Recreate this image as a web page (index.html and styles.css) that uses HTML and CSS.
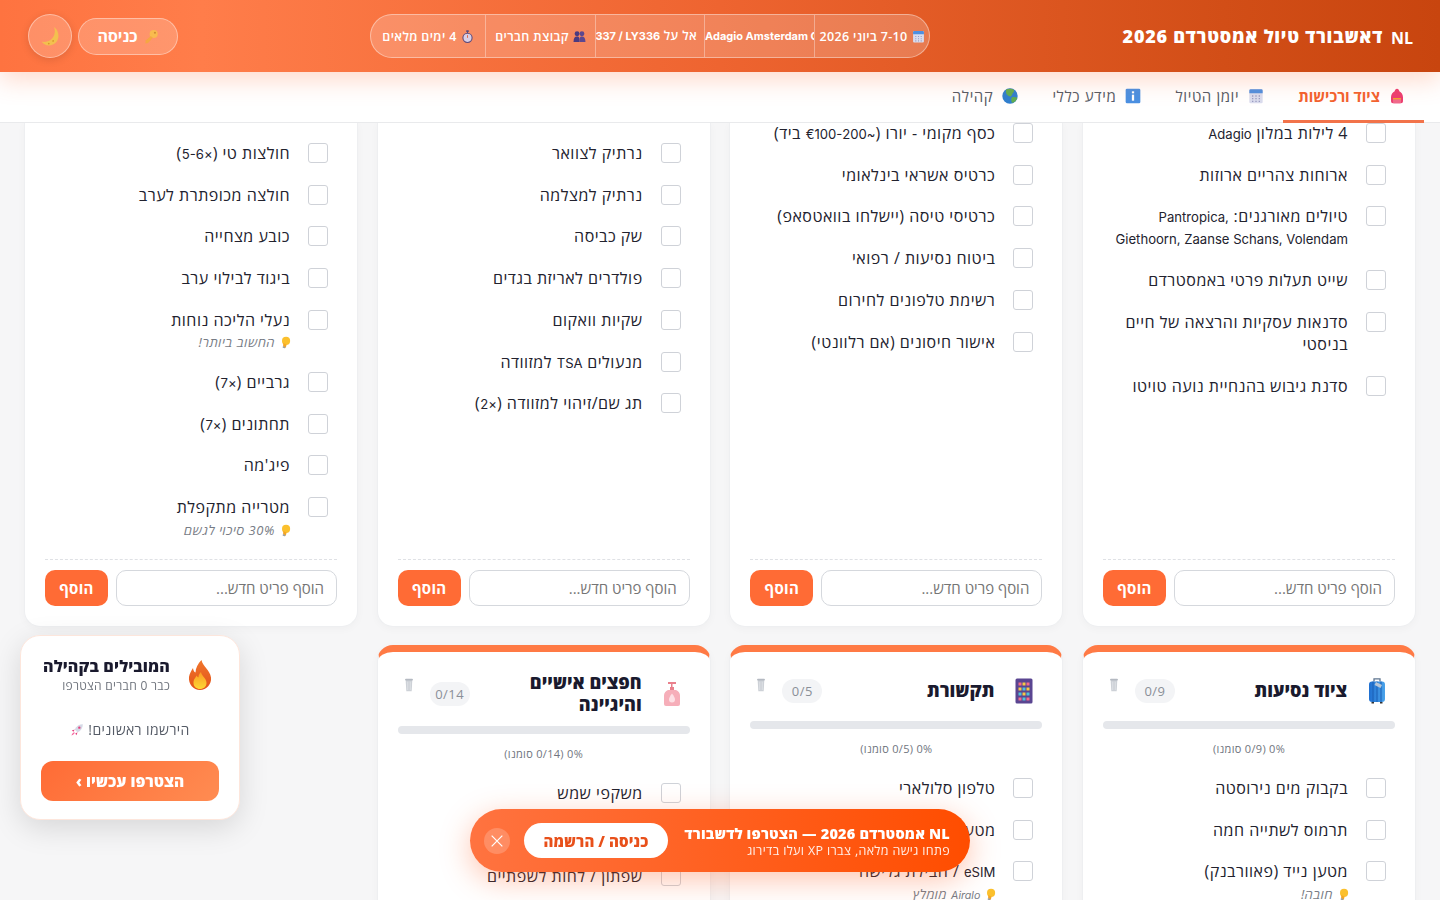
FILE: index.html
```html
<!DOCTYPE html>
<html lang="he" dir="rtl">

<head>
    <meta charset="UTF-8">
    <meta name="viewport" content="width=device-width, initial-scale=1.0">
    <title>דאשבורד טיול אמסטרדם 2026</title>
    <link rel="stylesheet" href="styles.css">
</head>

<body>
    <svg class="sprites" width="0" height="0" aria-hidden="true">
        <defs>
            <linearGradient id="flame" x1="0" y1="0" x2="0" y2="1">
                <stop offset="0" stop-color="#f0762b"/><stop offset="1" stop-color="#e3521a"/>
            </linearGradient>
            <linearGradient id="flameIn" x1="0" y1="0" x2="0" y2="1">
                <stop offset="0" stop-color="#fb9a24"/><stop offset="1" stop-color="#fdd835"/>
            </linearGradient>
            <linearGradient id="caseBlue" x1="0" y1="0" x2="1" y2="0">
                <stop offset="0" stop-color="#1f6fd0"/><stop offset="1" stop-color="#4aa3ea"/>
            </linearGradient>
        </defs>
        <symbol id="i-moon" viewBox="0 0 24 24"><path d="M16 1c2 5 .8 10.500-3 14-2.900 2.600-6.700 3.600-11 3 2.500 3.500 7.500 5.300 12 3.500 5.500-2.200 8.200-7.800 6.700-13.300C20 5 18.300 2.600 16 1z" fill="#f3c04f"/><circle cx="15" cy="17" r="1" fill="#d99a2b"/><circle cx="10" cy="20" r="1" fill="#d99a2b"/></symbol>
        <symbol id="i-key" viewBox="0 0 24 24"><circle cx="15.500" cy="8" r="6.500" fill="#f8c24a"/><path d="M11 11l3 3-7.500 8.500L2 23l1-5z" fill="#f4ab3c"/><circle cx="17.500" cy="6" r="1.700" fill="#c88c2a"/></symbol>
        <symbol id="i-watch" viewBox="0 0 24 24"><rect x="9.500" y="0.500" width="5" height="3" rx="1" fill="#5d4b7c"/><rect x="11" y="3" width="2" height="3" fill="#5d4b7c"/><circle cx="12" cy="14.500" r="8.500" fill="#d9cfe6" stroke="#5d4b7c" stroke-width="2"/><path d="M12 14.500V9.500" stroke="#e2552a" stroke-width="1.500"/></symbol>
        <symbol id="i-people" viewBox="0 0 24 24"><circle cx="7.500" cy="7" r="4.500" fill="#4b3a80"/><circle cx="16.500" cy="7" r="4.500" fill="#5b4790"/><path d="M1 22c0-7 2-10 6.500-10S12 15 12 22z" fill="#4b3a80"/><path d="M12 22c0-7 .5-10 4.500-10S23 15 23 22z" fill="#5b4790"/></symbol>
        <symbol id="i-cal" viewBox="0 0 24 24"><rect x="2" y="2" width="20" height="21" rx="2" fill="#d9dcee"/><path d="M2 8V4a2 2 0 0 1 2-2h16a2 2 0 0 1 2 2v4z" fill="#4f8fe0"/><path d="M6 11h2v2H6zm5 0h2v2h-2zm5 0h2v2h-2zM6 15h2v2H6zm5 0h2v2h-2zm5 0h2v2h-2zM6 19h2v2H6zm5 0h2v2h-2zm5 0h2v2h-2z" fill="#9a9dc2"/></symbol>
        <symbol id="i-bag" viewBox="0 0 24 24"><path d="M12 1C10 1 9 2.500 8.500 5 5.500 6.500 3 9.500 3 14v6a3 3 0 0 0 3 3h12a3 3 0 0 0 3-3v-6c0-4.500-2.500-7.500-5.500-9C15 2.500 14 1 12 1z" fill="#ec3f72"/><rect x="6" y="15" width="12" height="8" rx="1.500" fill="#f06a8b"/><path d="M6 15h12v2H6z" fill="#f4a32e"/></symbol>
        <symbol id="i-info" viewBox="0 0 24 24"><rect x="1" y="1" width="22" height="22" rx="2" fill="#4a90e2"/><rect x="10.300" y="10" width="3.400" height="9" fill="#fff"/><rect x="10.300" y="5" width="3.400" height="3" fill="#fff"/></symbol>
        <symbol id="i-globe" viewBox="0 0 24 24"><circle cx="12" cy="12" r="11.500" fill="#2f7fcf"/><path d="M7 2c3-1.500 8-1.500 11 1 1 3-2 4-3 7s-3 3-5 2-4-3-4-6 0-3 1-4zM15 14c3-1 6 0 8 .500-1 4-4 7-8 8-1-3-2-6.500 0-8.500z" fill="#5fae52"/></symbol>
        <symbol id="i-case" viewBox="0 0 18 26"><path d="M6 3.500V.800h6v2.700" fill="none" stroke="#5f7590" stroke-width="1.300"/><rect x="1" y="3.500" width="16" height="20.500" rx="3" fill="url(#caseBlue)"/><path d="M5 3.500V24M9 3.500V24M13 3.500V24" stroke="#1a5fb4" stroke-width="1"/><rect x="3.500" y="24" width="2.500" height="1.500" fill="#333"/><rect x="12" y="24" width="2.500" height="1.500" fill="#333"/><path d="M8 4l6 3-1.500 3-6-3z" fill="#b6c6d8"/></symbol>
        <symbol id="i-abacus" viewBox="0 0 18 26"><rect x="0.500" y="0.500" width="17" height="25" rx="1.500" fill="#5a4591"/><path d="M3.500 4.500h3v3h-3z" fill="#f56b8a"/><path d="M7.500 4.500h3v3h-3z" fill="#f6c945"/><path d="M11.500 4.500h3v3h-3z" fill="#f56b8a"/><path d="M3.500 9.500h3v3h-3z" fill="#f6c945"/><path d="M7.500 9.500h3v3h-3z" fill="#4fc3d9"/><path d="M11.500 9.500h3v3h-3z" fill="#f6c945"/><path d="M3.500 14.500h3v3h-3z" fill="#4fc3d9"/><path d="M7.500 14.500h3v3h-3z" fill="#f6c945"/><path d="M11.500 14.500h3v3h-3z" fill="#4fc3d9"/><path d="M3.500 19.500h3v3h-3z" fill="#f56b8a"/><path d="M7.500 19.500h3v3h-3z" fill="#4fc3d9"/><path d="M11.500 19.500h3v3h-3z" fill="#f56b8a"/></symbol>
        <symbol id="i-lotion" viewBox="0 0 18 26"><path d="M5 1h8v2H9.500v3h1.500v3H7V6h1V3H5z" fill="#e9808c"/><path d="M5 9h8c2.500 1 4 3 4 5.500V23a2 2 0 0 1-2 2H3a2 2 0 0 1-2-2v-8.500C1 12 2.500 10 5 9z" fill="#f6aeb9"/><path d="M9 12.500c2 2.500 3 4.500 3 6a3 3 0 0 1-6 0c0-1.500 1-3.500 3-6z" fill="#fde0e5"/></symbol>
        <symbol id="i-bin" viewBox="0 0 12 16"><path d="M2 2h8l-.8 13.500H2.800z" fill="#cdd1d7"/><rect x="1.300" y="0.500" width="9.400" height="2.200" rx="1" fill="#b4b9c1"/><path d="M4.500 4v10M7.500 4v10" stroke="#e6e8eb" stroke-width="0.800"/></symbol>
        <symbol id="i-bulb" viewBox="0 0 24 24"><circle cx="13" cy="9" r="7.500" fill="#fbc02d"/><path d="M8 13l6 3-1.500 5.500-5-2.500z" fill="#f5a623"/><rect x="7" y="19" width="5" height="3" rx="1" transform="rotate(20 9 20)" fill="#9e9e9e"/></symbol>
        <symbol id="i-fire" viewBox="0 0 24 30"><path d="M13.500 0c1 6 8.500 10 9.500 17.500.8 6.500-4.500 12.500-11 12.500S.2 24 1 17c.5-3.500 2.400-6.500 4-9 .3 2.500 1.200 4 2.500 4.500C7.500 8 10 3.500 13.500 0z" fill="url(#flame)"/><path d="M13 12c.5 4 5.500 6 5.500 11 0 3.800-3 6-6.500 6s-6.500-2.200-6.500-6c0-3.800 2-5 3-7.500.6 1.200 1.300 1.800 2 1.800 0-2 .8-3.800 2.500-5.300z" fill="url(#flameIn)"/></symbol>
        <symbol id="i-rocket" viewBox="0 0 24 24"><path d="M22 2c-6 0-11 3-14 9l5 5c6-3 9-8 9-14z" fill="#d5d9e6"/><circle cx="16" cy="8" r="2" fill="#e6407f"/><path d="M8 11l-5 2 3 2zm5 5l-2 5-2-3z" fill="#e6407f"/><path d="M8 16c-3 0-4.500 2.500-5.500 5.500C5.500 20.500 8 19 8 16z" fill="#f56aa0"/></symbol>
        <symbol id="i-x" viewBox="0 0 24 24"><path d="M4 4l16 16M20 4L4 20" stroke="#fff" stroke-width="1.800" fill="none"/></symbol>
    </svg>

    <header class="topbar">
        <div class="brand">
            <span class="brand-flag">NL</span>
            <h1>דאשבורד טיול אמסטרדם 2026</h1>
        </div>
        <div class="trip-info">
            <div class="info-cell"><svg class="ico-sm"><use href="#i-cal"/></svg>7-10 ביוני 2026</div>
            <div class="info-cell cell-ltr"><span class="lat">Adagio Amsterdam City Centre</span></div>
            <div class="info-cell cell-clip">אל על <span class="lat">LY336 /&rlm; 337'</span></div>
            <div class="info-cell"><svg class="ico-sm"><use href="#i-people"/></svg>קבוצת חברים</div>
            <div class="info-cell"><svg class="ico-sm"><use href="#i-watch"/></svg>4 ימים מלאים</div>
        </div>
        <div class="top-actions">
            <button class="login-btn"><svg class="ico-md"><use href="#i-key"/></svg>כניסה</button>
            <button class="theme-btn"><svg class="ico-lg"><use href="#i-moon"/></svg></button>
        </div>
    </header>

    <nav class="tabs">
        <a class="tab active"><svg class="ico-tab"><use href="#i-bag"/></svg>ציוד ורכישות</a>
        <a class="tab"><svg class="ico-tab"><use href="#i-cal"/></svg>יומן הטיול</a>
        <a class="tab"><svg class="ico-tab"><use href="#i-info"/></svg>מידע כללי</a>
        <a class="tab"><svg class="ico-tab"><use href="#i-globe"/></svg>קהילה</a>
    </nav>

    <main class="board">
        <!-- first row is scrolled past its heads -->
        <section class="card card-cut">
            <ul class="items start-high">
                <li><span class="check"></span><span class="label">4 לילות במלון <span class="lat">Adagio</span></span></li>
                <li><span class="check"></span><span class="label">ארוחות צהריים ארוזות</span></li>
                <li><span class="check"></span><span class="label">טיולים מאורגנים: <span class="lat">Pantropica, Giethoorn, Zaanse Schans, Volendam</span></span></li>
                <li><span class="check"></span><span class="label">שייט תעלות פרטי באמסטרדם</span></li>
                <li><span class="check"></span><span class="label">סדנאות עסקיות והרצאה של חיים בניסטי</span></li>
                <li><span class="check"></span><span class="label">סדנת גיבוש בהנחיית נועה טויטו</span></li>
            </ul>
            <form class="add-row"><input type="text" placeholder="הוסף פריט חדש..."><button type="button">הוסף</button></form>
        </section>

        <section class="card card-cut">
            <ul class="items start-high">
                <li><span class="check"></span><span class="label">כסף מקומי - יורו (<span class="lat">~€100-200</span> ביד)</span></li>
                <li><span class="check"></span><span class="label">כרטיס אשראי בינלאומי</span></li>
                <li><span class="check"></span><span class="label">כרטיסי טיסה (יישלחו בוואטסאפ)</span></li>
                <li><span class="check"></span><span class="label">ביטוח נסיעות / רפואי</span></li>
                <li><span class="check"></span><span class="label">רשימת טלפונים לחירום</span></li>
                <li><span class="check"></span><span class="label">אישור חיסונים (אם רלוונטי)</span></li>
            </ul>
            <form class="add-row"><input type="text" placeholder="הוסף פריט חדש..."><button type="button">הוסף</button></form>
        </section>

        <section class="card card-cut">
            <ul class="items start-low">
                <li><span class="check"></span><span class="label">נרתיק לצוואר</span></li>
                <li><span class="check"></span><span class="label">נרתיק למצלמה</span></li>
                <li><span class="check"></span><span class="label">שק כביסה</span></li>
                <li><span class="check"></span><span class="label">פולדרים לאריזת בגדים</span></li>
                <li><span class="check"></span><span class="label">שקיות וואקום</span></li>
                <li><span class="check"></span><span class="label">מנעולים <span class="lat">TSA</span> למזוודה</span></li>
                <li><span class="check"></span><span class="label">תג שם/זיהוי למזוודה (<span class="lat">×2</span>)</span></li>
            </ul>
            <form class="add-row"><input type="text" placeholder="הוסף פריט חדש..."><button type="button">הוסף</button></form>
        </section>

        <section class="card card-cut">
            <ul class="items start-low">
                <li><span class="check"></span><span class="label">חולצות טי (<span class="lat">×5-6</span>)</span></li>
                <li><span class="check"></span><span class="label">חולצה מכופתרת לערב</span></li>
                <li><span class="check"></span><span class="label">כובע מצחייה</span></li>
                <li><span class="check"></span><span class="label">ביגוד לבילוי ערב</span></li>
                <li><span class="check"></span><div class="label">נעלי הליכה נוחות<small class="tip"><svg class="ico-tip"><use href="#i-bulb"/></svg><span>החשוב ביותר!</span></small></div></li>
                <li><span class="check"></span><span class="label">גרביים (<span class="lat">×7</span>)</span></li>
                <li><span class="check"></span><span class="label">תחתונים (<span class="lat">×7</span>)</span></li>
                <li><span class="check"></span><span class="label">פיג'מה</span></li>
                <li><span class="check"></span><div class="label">מטרייה מתקפלת<small class="tip"><svg class="ico-tip"><use href="#i-bulb"/></svg><span>30% סיכוי לגשם</span></small></div></li>
            </ul>
            <form class="add-row"><input type="text" placeholder="הוסף פריט חדש..."><button type="button">הוסף</button></form>
        </section>

        <section class="card">
            <div class="card-head">
                <svg class="ico-card"><use href="#i-case"/></svg>
                <h2>ציוד נסיעות</h2>
                <span class="count">0/9</span>
                <svg class="ico-bin"><use href="#i-bin"/></svg>
            </div>
            <div class="progress"></div>
            <p class="progress-text">0% (0/9 סומנו)</p>
            <ul class="items">
                <li><span class="check"></span><span class="label">בקבוק מים נירוסטה</span></li>
                <li><span class="check"></span><span class="label">תרמוס לשתייה חמה</span></li>
                <li><span class="check"></span><div class="label">מטען נייד (פאוורבנק)<small class="tip"><svg class="ico-tip"><use href="#i-bulb"/></svg><span>חובה!</span></small></div></li>
            </ul>
        </section>

        <section class="card">
            <div class="card-head">
                <svg class="ico-card"><use href="#i-abacus"/></svg>
                <h2>תקשורת</h2>
                <span class="count">0/5</span>
                <svg class="ico-bin"><use href="#i-bin"/></svg>
            </div>
            <div class="progress"></div>
            <p class="progress-text">0% (0/5 סומנו)</p>
            <ul class="items">
                <li><span class="check"></span><span class="label">טלפון סלולארי</span></li>
                <li><span class="check"></span><span class="label">מטען לטלפון</span></li>
                <li><span class="check"></span><div class="label"><span class="lat">eSIM</span> / חבילת גלישה<small class="tip"><svg class="ico-tip"><use href="#i-bulb"/></svg><span><span class="lat">Airalo</span> מומלץ</span></small></div></li>
            </ul>
        </section>

        <section class="card">
            <div class="card-head">
                <svg class="ico-card"><use href="#i-lotion"/></svg>
                <h2>חפצים אישיים והיגיינה</h2>
                <span class="count">0/14</span>
                <svg class="ico-bin"><use href="#i-bin"/></svg>
            </div>
            <div class="progress"></div>
            <p class="progress-text">0% (0/14 סומנו)</p>
            <ul class="items">
                <li><span class="check"></span><span class="label">משקפי שמש</span></li>
                <li><span class="check"></span><span class="label">קרם הגנה</span></li>
                <li><span class="check"></span><span class="label">שפתון / לחות לשפתיים</span></li>
            </ul>
        </section>
    </main>

    <aside class="leaders">
        <div class="leaders-head">
            <svg class="ico-fire"><use href="#i-fire"/></svg>
            <div>
                <h3>המובילים בקהילה</h3>
                <p>כבר 0 חברים הצטרפו</p>
            </div>
        </div>
        <p class="leaders-empty">הירשמו ראשונים! <svg class="ico-rocket"><use href="#i-rocket"/></svg></p>
        <button class="join-btn">הצטרפו עכשיו ›</button>
    </aside>

    <div class="promo">
        <div class="promo-text">
            <strong>NL אמסטרדם 2026 — הצטרפו לדשבורד</strong>
            <span>פתחו גישה מלאה, צברו XP ועלו בדירוג</span>
        </div>
        <button class="promo-btn">כניסה / הרשמה</button>
        <button class="promo-close"><svg class="ico-x"><use href="#i-x"/></svg></button>
    </div>
</body>

</html>
```

FILE: styles.css
```css
* {
    box-sizing: border-box;
}

html,
body {
    height: 100%;
    overflow: hidden;
}

body {
    margin: 0;
    background-color: #f6f6f7;
    font-family: "Open Sans", "DejaVu Sans", sans-serif;
    color: #1a1a2e;
}

.sprites {
    position: absolute;
}

ul {
    list-style: none;
    margin: 0;
    padding: 0;
}

button {
    font-family: inherit;
    border: none;
    cursor: pointer;
}

/* latin runs sit smaller next to the hebrew */
.lat {
    font-family: "Inter", sans-serif;
    font-size: 0.82em;
    line-height: 0;
    letter-spacing: 0;
}

.topbar {
    height: 72px;
    padding: 0 27px 0 28px;
    display: flex;
    align-items: center;
    background: linear-gradient(90deg, #fe7340 0%, #ff7d4a 14%, #ee6430 50%, #d24e17 85%, #c8450f 100%);
    box-shadow: 0 8px 24px rgba(255, 107, 53, 0.25);
    color: white;
    position: relative;
    z-index: 2;
}

.brand {
    display: flex;
    align-items: center;
    gap: 8px;
    width: 291px;
}

.brand-flag {
    margin-top: 3px;
    font-size: 16px;
    font-weight: 700;
}

.brand h1 {
    margin: 0;
    font-size: 18px;
    letter-spacing: 0.75px;
    font-weight: 800;
    white-space: nowrap;
}

.trip-info {
    display: grid;
    grid-template-columns: 114px 110px 109px 110px 1fr;
    width: 560px;
    height: 44px;
    margin-inline-start: 192px;
    border-radius: 22px;
    border: 1px solid rgba(255, 255, 255, 0.4);
    background: rgba(255, 255, 255, 0.2);
    overflow: hidden;
    font-size: 12.500px;
    letter-spacing: 0.35px;
    font-weight: 600;
}

.info-cell {
    display: flex;
    align-items: center;
    justify-content: center;
    gap: 4px;
    min-width: 0;
    white-space: nowrap;
    border-inline-start: 1px solid rgba(255, 255, 255, 0.35);
}

.info-cell:first-child {
    border: none;
}

.cell-clip {
    display: block;
    line-height: 42px;
    padding-inline-start: 7px;
    overflow: hidden;
}

.cell-clip .lat,
.cell-ltr .lat {
    font-size: 11px;
    font-weight: 700;
}

.cell-ltr {
    display: block;
    direction: ltr;
    line-height: 42px;
    overflow: hidden;
    border-inline-start: none;
    border-right: 1px solid rgba(255, 255, 255, 0.35);
}

.top-actions {
    display: flex;
    align-items: center;
    gap: 6px;
    margin-inline-start: auto;
}

.login-btn {
    display: flex;
    align-items: center;
    justify-content: center;
    gap: 6px;
    width: 100px;
    height: 37px;
    border-radius: 19px;
    border: 1px solid rgba(255, 255, 255, 0.4);
    background: rgba(255, 255, 255, 0.2);
    color: white;
    font-size: 16px;
    font-weight: 700;
}

.theme-btn {
    width: 44px;
    height: 44px;
    border-radius: 50%;
    border: 1px solid rgba(255, 255, 255, 0.4);
    background: rgba(255, 255, 255, 0.2);
    display: flex;
    align-items: center;
    justify-content: center;
    box-shadow: 0 2px 8px rgba(0, 0, 0, 0.12);
}

.ico-sm {
    width: 13px;
    height: 13px;
    flex: none;
}

.ico-md {
    width: 15px;
    height: 15px;
    opacity: 0.85;
}

.ico-lg {
    width: 21px;
    height: 21px;
}

.tabs {
    height: 51px;
    display: flex;
    padding: 0 16px;
    background: white;
    border-bottom: 1px solid #e9eaec;
}

.tab {
    display: flex;
    align-items: center;
    gap: 9px;
    padding: 0 19px 0 15px;
    font-size: 15px;
    letter-spacing: 0.6px;
    font-weight: 500;
    color: #555b66;
    border-bottom: 3px solid transparent;
    margin-bottom: -1px;
}

.tab.active {
    color: #f2622f;
    font-weight: 700;
    letter-spacing: 0;
    border-bottom-color: #f2734a;
}

.ico-tab {
    width: 16px;
    height: 16px;
}

.board {
    height: 777px;
    overflow: hidden;
    padding: 0 24px;
    display: grid;
    grid-template-columns: repeat(4, minmax(0, 1fr));
    grid-template-rows: 504px 1fr;
    gap: 18px 18.670px;
}

.card {
    background: white;
    border: 1px solid #eeeff1;
    border-top: 7px solid #ff7a45;
    border-radius: 16px 16px 0 0;
    padding: 20px;
    display: flex;
    flex-direction: column;
    box-shadow: 0 2px 8px rgba(0, 0, 0, 0.03);
}

.card-cut {
    border-top: none;
    border-radius: 0 0 16px 16px;
    padding: 0 20px 20px;
}

.card-head {
    display: flex;
    align-items: center;
    min-height: 38px;
    padding-inline-start: 9px;
}

.card-head h2 {
    flex: 1;
    margin: 0 21px 0 0;
    font-size: 18px;
    line-height: 21.500px;
    font-weight: 800;
}

.ico-card {
    width: 18px;
    height: 26px;
    flex: none;
}

.count {
    width: 40px;
    padding: 3px 0;
    margin-inline-start: 10px;
    background: #f3f4f6;
    border-radius: 12px;
    text-align: center;
    font-size: 13px;
    letter-spacing: 0.5px;
    color: #8a8f98;
}

.ico-bin {
    width: 10px;
    height: 14px;
    margin: 6px 16px 0 6px;
    flex: none;
    align-self: flex-start;
}

.progress {
    height: 8px;
    margin-top: 11px;
    background: #e5e7eb;
    border-radius: 4px;
}

.progress-text {
    margin: 14px 0 12px;
    text-align: center;
    font-size: 11px;
    letter-spacing: 0.3px;
    line-height: 12px;
    color: #70757e;
}

.items {
    flex: 1;
    padding: 0 9px;
}

.items li {
    display: flex;
    gap: 18px;
    padding: 9.875px 0;
}

.start-high {
    margin-top: -11px;
}

.start-low {
    padding-top: 9px;
}

.check {
    width: 20px;
    height: 20px;
    margin-top: 1px;
    flex: none;
    background: white;
    border: 1.500px solid #cfd2d8;
    border-radius: 3px;
}

.label {
    font-size: 16px;
    letter-spacing: 0.5px;
    line-height: 22px;
    color: #22222e;
}

.tip {
    display: flex;
    align-items: center;
    gap: 4px;
    margin-top: 3.500px;
    margin-inline-start: -2px;
    font-size: 13px;
    letter-spacing: 0.6px;
    line-height: 16.750px;
    font-style: italic;
    color: #777c85;
}

.ico-tip {
    width: 13px;
    height: 13px;
    flex: none;
}

.add-row {
    display: flex;
    gap: 8px;
    padding-top: 10px;
    border-top: 1px dashed #dfe1e5;
}

.add-row input {
    flex: 1;
    min-width: 0;
    height: 36px;
    padding: 0 12px;
    font-family: inherit;
    font-size: 15px;
    background: white;
    border: 1px solid #d5d8dd;
    border-radius: 10px;
}

.add-row button {
    width: 63px;
    height: 36px;
    background: #ff6b35;
    border-radius: 10px;
    color: white;
    font-size: 15px;
    letter-spacing: 0.3px;
    font-weight: 700;
}

.leaders {
    position: fixed;
    left: 20px;
    top: 635px;
    width: 220px;
    height: 185px;
    padding: 20px 20px 18px;
    display: flex;
    flex-direction: column;
    background: white;
    border: 1px solid #fde6dc;
    border-radius: 20px;
    box-shadow: 0 8px 30px rgba(0, 0, 0, 0.13);
    z-index: 3;
}

.leaders-head {
    display: flex;
    align-items: center;
    gap: 18px;
    padding-inline-start: 7px;
}

.leaders h3 {
    margin: 0;
    font-size: 16px;
    letter-spacing: 0.15px;
    line-height: 20px;
    font-weight: 800;
    white-space: nowrap;
}

.leaders-head p {
    margin: 2px 0 0;
    font-size: 12px;
    letter-spacing: 0.3px;
    line-height: 16px;
    color: #6f747d;
}

.ico-fire {
    width: 24px;
    height: 30px;
    flex: none;
}

.leaders-empty {
    margin: 27px 0 0;
    text-align: center;
    font-size: 14px;
    letter-spacing: 0.4px;
    line-height: 18px;
    color: #555b66;
}

.ico-rocket {
    width: 14px;
    height: 14px;
    vertical-align: -2px;
}

.join-btn {
    width: 178px;
    height: 40px;
    margin-top: auto;
    background: linear-gradient(135deg, #ff6b35, #ff8c52);
    border-radius: 12px;
    color: white;
    font-size: 15.500px;
    font-weight: 800;
}

.promo {
    position: fixed;
    left: 470px;
    top: 809px;
    width: 500px;
    height: 63px;
    padding: 0 20px 0 14px;
    display: flex;
    align-items: center;
    gap: 14px;
    background: linear-gradient(90deg, #ff7340, #ff4d00);
    border-radius: 32px;
    box-shadow: 0 8px 30px rgba(255, 90, 30, 0.35);
    color: white;
    z-index: 3;
}

.promo-text {
    flex: 1;
    display: flex;
    flex-direction: column;
    margin-top: 2px;
    white-space: nowrap;
}

.promo-text strong {
    font-size: 14.500px;
    letter-spacing: 0.2px;
    line-height: 19px;
    font-weight: 800;
}

.promo-text span {
    font-size: 12.500px;
    letter-spacing: 0.35px;
    line-height: 16px;
    opacity: 0.9;
}

.promo-btn {
    width: 144px;
    height: 35px;
    background: white;
    border-radius: 18px;
    color: #e8501a;
    font-size: 15px;
    letter-spacing: 0.1px;
    font-weight: 800;
}

.promo-close {
    width: 26px;
    height: 26px;
    padding: 5px;
    background: rgba(255, 255, 255, 0.2);
    border-radius: 50%;
}

.ico-x {
    display: block;
    width: 16px;
    height: 16px;
}
```
